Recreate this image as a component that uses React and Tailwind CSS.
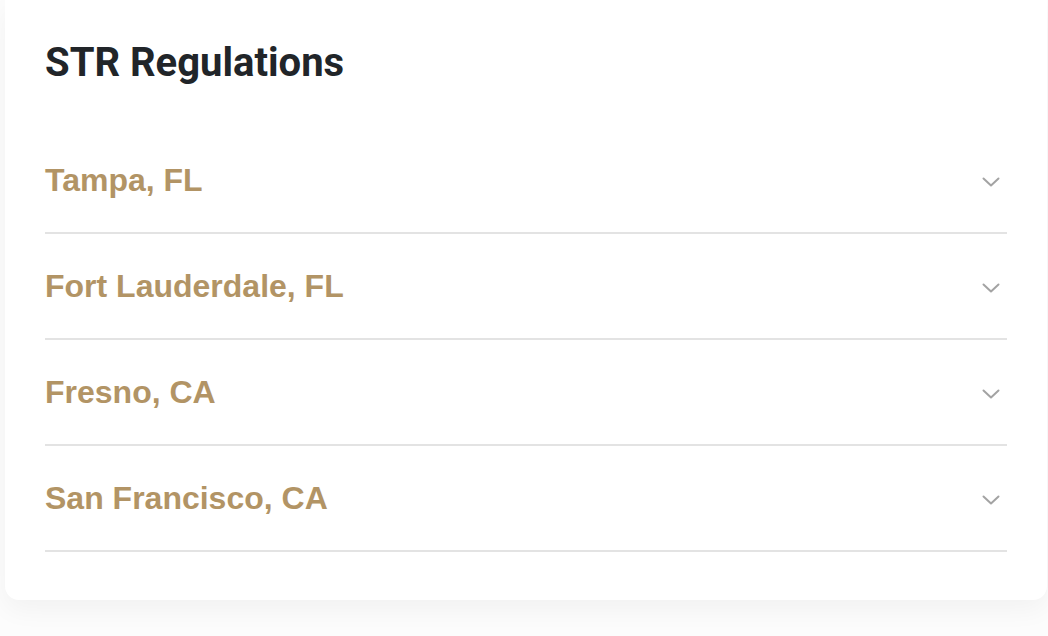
import { useState } from 'react';

const cities = ['Tampa, FL', 'Fort Lauderdale, FL', 'Fresno, CA', 'San Francisco, CA'];

function Chevron() {
  return (
    <svg width="18" height="10" viewBox="0 0 18 10" fill="none" className="mt-[3px] text-[#a3a3a3]">
      <path d="M1.5 1.5 L9 8.5 L16.5 1.5" stroke="currentColor" strokeWidth="2" strokeLinecap="round" strokeLinejoin="round" />
    </svg>
  );
}

function AccordionRow({ label }) {
  const [open, setOpen] = useState(false);
  return (
    <div className="border-b-2 border-[#e3e3e3]">
      <button
        onClick={() => setOpen(!open)}
        className="flex h-[104px] w-full items-center justify-between pr-[7px] text-left"
      >
        <span className="font-['Liberation_Sans',Arial,sans-serif] text-[32px] font-bold text-[#b29465]">{label}</span>
        <Chevron />
      </button>
    </div>
  );
}

export default function App() {
  return (
    <div className="min-h-screen bg-[#fcfcfc] pl-[5px] pr-[1px]">
      <div className="rounded-b-[14px] bg-white px-10 pb-[48px] pt-[41px] shadow-[0_10px_26px_rgba(0,0,0,0.045)]">
        <h2 className="font-['Roboto',sans-serif] text-[40px] font-bold leading-[44px] text-[#212529]">STR Regulations</h2>
        <div className="mt-[43px]">
          {cities.map((c) => (
            <AccordionRow key={c} label={c} />
          ))}
        </div>
      </div>
    </div>
  );
}
